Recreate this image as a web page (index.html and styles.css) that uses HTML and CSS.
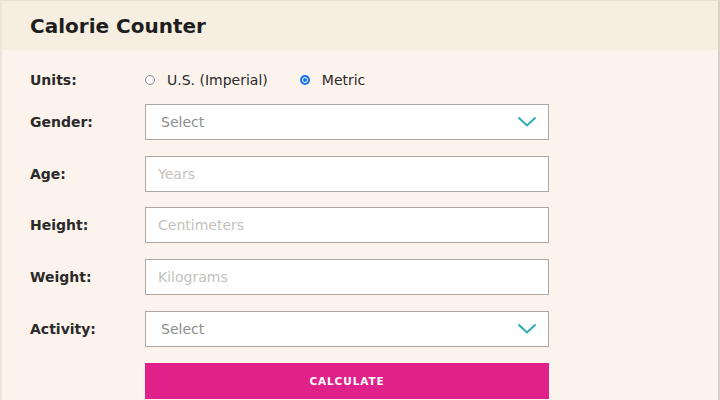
FILE: index.html
```html
<!DOCTYPE html>
<html>
<head>
<meta charset="utf-8">
<link rel="stylesheet" href="styles.css">
</head>
<body>
<div class="card">
  <div class="header"><h1 class="title">Calorie Counter</h1></div>
  <form class="form">
    <div class="row units-row">
      <span class="label">Units:</span>
      <div class="radios">
        <label class="radio"><span class="dot"></span>U.S. (Imperial)</label>
        <label class="radio"><span class="dot on"></span>Metric</label>
      </div>
    </div>
    <div class="row">
      <span class="label">Gender:</span>
      <div class="field select"><span class="sel-text">Select</span>
        <svg class="chev" width="20" height="12" viewBox="0 0 20 12"><path d="M1.5 1.5 L10 9.5 L18.5 1.5" fill="none" stroke="#2bacb4" stroke-width="2"/></svg>
      </div>
    </div>
    <div class="row">
      <span class="label">Age:</span>
      <div class="field"><span class="ph">Years</span></div>
    </div>
    <div class="row">
      <span class="label">Height:</span>
      <div class="field"><span class="ph">Centimeters</span></div>
    </div>
    <div class="row">
      <span class="label">Weight:</span>
      <div class="field"><span class="ph">Kilograms</span></div>
    </div>
    <div class="row">
      <span class="label">Activity:</span>
      <div class="field select"><span class="sel-text">Select</span>
        <svg class="chev" width="20" height="12" viewBox="0 0 20 12"><path d="M1.5 1.5 L10 9.5 L18.5 1.5" fill="none" stroke="#2bacb4" stroke-width="2"/></svg>
      </div>
    </div>
    <div class="row">
      <span class="label"></span>
      <div class="button">CALCULATE</div>
    </div>
  </form>
</div>
</body>
</html>
```
FILE: styles.css
```css
html, body {
  margin: 0;
  padding: 0;
  background: #fbf3ec;
}
body {
  font-family: "DejaVu Sans", "Liberation Sans", sans-serif;
  color: #222;
  width: 720px;
  height: 400px;
  overflow: hidden;
}
.card {
  width: 716px;
  height: 400px;
  border-left: 2px solid #ece5dc;
  border-right: 2px solid #d9d2ca;
  border-top: 1px solid #e8e0d2;
  background: #fbf3ec;
}
.header {
  height: 49px;
  background: #f6eee0;
  display: flex;
  align-items: center;
  padding-left: 28px;
}
.title {
  margin: 0;
  font-size: 20px;
  font-weight: 700;
  color: #1e1e1e;
}
.form {
  padding: 12px 0 0 28px;
  display: flex;
  flex-direction: column;
  gap: 15.75px;
}
.row {
  display: flex;
  align-items: center;
}
.units-row {
  height: 32px;
  margin-bottom: -8px;
  padding-top: 2px;
}
.label {
  width: 115px;
  font-size: 14px;
  font-weight: 700;
  color: #2a2a2a;
}
.radios {
  display: flex;
  gap: 32px;
}
.radio {
  display: flex;
  align-items: center;
  font-size: 14px;
  color: #2a2a2a;
}
.dot {
  width: 10px;
  height: 10px;
  border: 1px solid #8a8a8a;
  border-radius: 50%;
  margin-right: 12px;
  box-sizing: border-box;
  background: #fff;
}
.dot.on {
  border: 2px solid #1a73e8;
  background: #1a73e8;
  box-shadow: inset 0 0 0 1px #fff;
}
.field {
  width: 404px;
  height: 36px;
  box-sizing: border-box;
  border: 1.5px solid #aca7a2;
  background: #fff;
  display: flex;
  align-items: center;
  padding-left: 12px;
  padding-right: 11px;
  font-size: 14px;
}
.select {
  justify-content: space-between;
  padding-left: 15px;
}
.sel-text {
  color: #8e8e8e;
}
.ph {
  color: #c4c1bd;
}
.chev {
  display: block;
}
.button {
  width: 404px;
  height: 36px;
  background: #e0218a;
  color: #fff;
  font-size: 10.5px;
  font-weight: 700;
  display: flex;
  align-items: center;
  justify-content: center;
  letter-spacing: 0.9px;
}
```
